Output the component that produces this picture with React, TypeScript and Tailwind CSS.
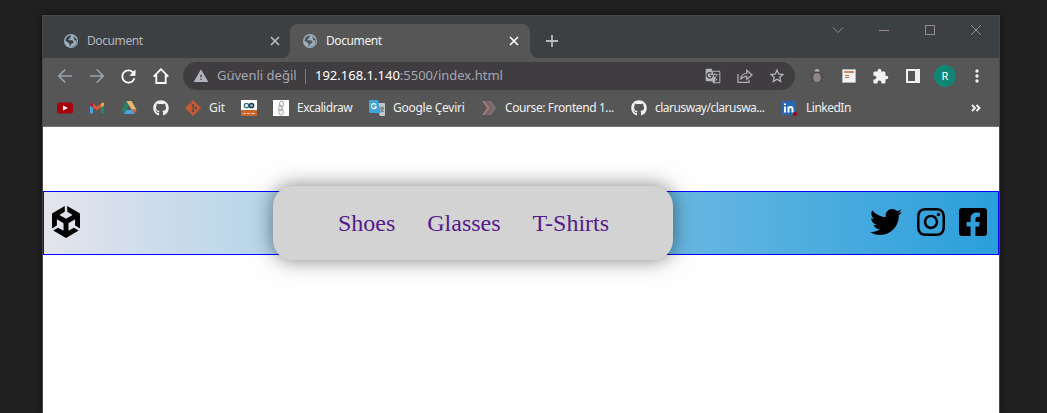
import React from "react";
import { FaUnity, FaTwitter, FaInstagram, FaGithub } from "react-icons/fa6";
import { FaFacebookSquare } from "react-icons/fa";
import { MdRefresh, MdWarning, MdGTranslate, MdStarBorder, MdExtension } from "react-icons/md";

function Close({ className }: { className: string }) {
  return (
    <svg viewBox="0 0 10 10" className={`h-[10px] w-[10px] shrink-0 ${className}`} fill="none" stroke="currentColor" strokeWidth="1.6">
      <path d="M1 1l8 8M9 1l-8 8" />
    </svg>
  );
}

function Globe({ hole }: { hole: string }) {
  return (
    <svg viewBox="0 0 14 14" className="h-[14px] w-[14px] shrink-0">
      <circle cx="7" cy="7" r="7" fill="#9bb0c1" />
      <path
        className={hole}
        d="M1.500 6.800C1.500 4 3.500 1.900 6 1.500L7.800 1.700L6.300 2.800L6.400 4.200L4.600 5L4.900 6.200H8.200L9.600 7.800L9.200 9.300L7.400 9.700L6.600 11.300L5.800 12.500C7.600 13 9.700 12.300 11 10.900C12.200 9.700 12.700 8.200 12.400 6.500L11 6.600L9.700 5.500L10.500 4.300L9.200 3.500L9.600 2.300L12.600 5.200L13 8.200L11.400 11.300L8.500 12.900L5.300 12.600L5.600 10.400L4.600 8.700L2.600 7.400Z"
      />
    </svg>
  );
}

function Arrow({ className = "" }: { className?: string }) {
  return (
    <svg viewBox="0 0 16 16" className={`h-4 w-4 shrink-0 text-[#99a3b3] ${className}`} fill="none" stroke="currentColor" strokeWidth="1.7">
      <path d="M15 8H2M8.2 1.5L1.8 8l6.4 6.5" />
    </svg>
  );
}

function Tabs() {
  return (
    <div className="flex h-[43px] border-t border-[#4b4b4d] bg-[#3c4043] pt-2">
      <div className="flex h-[34px] w-[247px] shrink-0 items-center pl-[21px] text-[#b7b5bd]">
        <Globe hole="fill-[#3c4043]" />
        <span className="ml-[9px] w-[183px] text-[12px] tracking-[-0.4px]">Document</span>
        <Close className="text-[#c0bcc0]" />
      </div>
      <div className="relative flex h-[34px] w-[240px] shrink-0 items-center rounded-t-lg bg-[#565656] pl-[13px] text-[#f1f3f4]">
        <span className="absolute bottom-0 -left-2 h-2 w-2 bg-[radial-gradient(circle_at_0_0,#3c4043_7.5px,#565656_8px)]" />
        <Globe hole="fill-[#565656]" />
        <span className="ml-[9px] w-[183px] text-[12px] tracking-[-0.4px]">Document</span>
        <Close className="text-white" />
        <span className="absolute -right-2 bottom-0 h-2 w-2 bg-[radial-gradient(circle_at_100%_0,#3c4043_7.5px,#565656_8px)]" />
      </div>
      <svg viewBox="0 0 12 12" className="mt-[11px] ml-4 h-3 w-3 text-[#b4b9bf]" stroke="currentColor" strokeWidth="1.8">
        <path d="M6 0v12M0 6h12" />
      </svg>
      <svg viewBox="0 0 150 12" className="mr-[17px] ml-auto h-3 w-[150px] text-[#9b8a92]" fill="none" stroke="currentColor" strokeWidth="1">
        <path d="M1 3.5l5 5 5-5M47 6.5h10M93.5 1.5h9v9h-9zM139 1l10 10M149 1l-10 10" />
      </svg>
    </div>
  );
}

function Toolbar() {
  return (
    <div className="flex h-9 items-center pl-[14px]">
      <Arrow />
      <Arrow className="ml-4 rotate-180" />
      <MdRefresh className="ml-[13px] h-[21px] w-[21px] shrink-0 text-white" />
      <svg viewBox="0 0 16 16" className="ml-[14px] h-4 w-4 shrink-0 text-white" fill="none" stroke="currentColor" strokeWidth="1.8">
        <path d="M.7 8.7L8 1.2l7.3 7.5M3.3 7v8h9.4V7" />
      </svg>
      <div className="ml-[14px] flex h-7 w-[612px] shrink-0 items-center rounded-full bg-[#403d40] pl-[10px] text-[13px] text-[#a5a7b3]">
        <MdWarning className="h-4 w-4 shrink-0 text-[#b0b5bd]" />
        <span className="ml-2 w-[88px] shrink-0 whitespace-nowrap">Güvenli değil</span>
        <span className="h-[15px] w-px shrink-0 bg-[#827981]" />
        <span className="ml-[9px] w-[391px] shrink-0 whitespace-nowrap">
          <span className="text-white">192.168.1.140</span>:5500/index.html
        </span>
        <MdGTranslate className="-ml-px h-4 w-4 shrink-0 text-[#b4b5ba]" />
        <svg viewBox="0 0 16 14" className="ml-[16px] h-[14px] w-4 shrink-0 text-[#b4afb7]" fill="none" stroke="currentColor" strokeWidth="1.2">
          <path d="M1 5v8.3h11v-2.5M3.7 10.5c.3-4 2.5-6 6-6V1.2L15 6 9.700 10.500V7.300C7 7.300 5 8.200 3.700 10.500z" />
        </svg>
        <MdStarBorder className="ml-[15px] h-[18px] w-[18px] shrink-0 text-[#bbb9c2]" />
      </div>
      <svg viewBox="0 0 16 16" className="ml-[14px] h-4 w-4 shrink-0">
        <path d="M2 5l3 2M14 5l-3 2M1 9h14M2 14l3-3M14 14l-3-3" stroke="#474347" strokeWidth="1" />
        <path d="M5.500 3.500a2.500 2.500 0 015 0z" fill="#b5adb6" />
        <ellipse cx="8" cy="9.500" rx="3.700" ry="4.500" fill="#92838a" />
        <path d="M5 4.500h6" stroke="#444" />
      </svg>
      <svg viewBox="0 0 14 14" className="ml-[17px] h-[14px] w-[14px] shrink-0">
        <path fill="#f4f4f4" stroke="#adb6bd" d="M.5.5h13v13H.5z" />
        <path stroke="#c56d41" strokeWidth="1.600" d="M2 3h10" />
        <path stroke="#c56d41" d="M3 6.500h4M3 8.500h4" />
      </svg>
      <MdExtension className="ml-[16px] h-[17px] w-[17px] shrink-0 text-[#f1f1f1]" />
      <svg viewBox="0 0 14 14" className="ml-[17px] h-[14px] w-[14px] shrink-0">
        <path fill="#f1f1f1" fillRule="evenodd" d="M0 0h14v14H0zM2 2v10h7V2z" />
      </svg>
      <span className="ml-[14px] flex h-[22px] w-[22px] shrink-0 items-center justify-center rounded-full bg-[#128577] text-[11px] text-white">R</span>
      <svg viewBox="0 0 4 14" className="ml-[19px] h-[14px] w-1 shrink-0" fill="#f1f1f1">
        <circle cx="2" cy="2" r="1.700" /><circle cx="2" cy="7" r="1.700" /><circle cx="2" cy="12" r="1.700" />
      </svg>
    </div>
  );
}

function Bookmark({ className, label, children }: { className: string; label?: string; children: React.ReactNode }) {
  return (
    <div className={`flex shrink-0 items-center gap-2 whitespace-nowrap ${className}`}>
      {children}
      {label && <span>{label}</span>}
    </div>
  );
}

function Bookmarks() {
  return (
    <div className="flex h-[33px] items-center border-b border-[#777377] pb-[5px] pl-[14px] text-[12px] text-[#f0f0f0] [&_svg]:h-4 [&_svg]:w-4 [&_svg]:shrink-0">
      <Bookmark className="w-8">
        <svg viewBox="0 0 16 16"><rect y="2.500" width="16" height="11" rx="2.500" fill="#a50008" /><path d="M6 5.500l5 2.500-5 2.500z" fill="#fff" /></svg>
      </Bookmark>
      <Bookmark className="w-8">
        <svg viewBox="0 0 16 16">
          <path d="M1 4.500l3 2v7H1z" fill="#4c9fda" /><path d="M15 4.500l-3 2v7h3z" fill="#258a5a" />
          <path d="M1 3q1-1 3 .5l4 3.200 4-3.200v4L8 10.500 4 7.500 1 5.500z" fill="#d55638" />
          <path d="M1 3q1-1 3 .5v4l-3-2z" fill="#a52029" /><path d="M12 3.500Q14 2 15 3v2.500l-3 2z" fill="#e5ad4c" />
        </svg>
      </Bookmark>
      <Bookmark className="w-8">
        <svg viewBox="0 0 16 16"><path d="M5.500 1h5L3 14 .5 9.800z" fill="#278465" /><path d="M5.500 1h5l5 8.800h-5z" fill="#e5b76b" /><path d="M3 14l2.500-4.200h10L13 14z" fill="#47a2dd" /><path d="M10.500 9.800h5L13 14z" fill="#ca6548" /><path d="M8 5.500l2.500 4.300h-5z" fill="#565656" /></svg>
      </Bookmark>
      <Bookmark className="w-8"><FaGithub /></Bookmark>
      <Bookmark className="w-14" label="Git">
        <svg viewBox="0 0 16 16"><path d="M8 .2L15.800 8 8 15.800.2 8z" fill="#c85b33" stroke="#c85b33" strokeWidth=".4" strokeLinejoin="round" /><path d="M5.500 2.700L8 5.200v6M8 5.500l3 3" fill="none" stroke="#5b4b48" /><g fill="#5b4b48"><circle cx="8" cy="5.300" r="1.200" /><circle cx="8" cy="11" r="1.200" /><circle cx="11" cy="8.300" r="1.200" /></g></svg>
      </Bookmark>
      <Bookmark className="w-8">
        <svg viewBox="0 0 16 16"><path fill="#fff" d="M0 0h16v10H0z" /><path fill="#c8662e" d="M0 10h16v6H0z" /><circle cx="5.500" cy="5.500" r="2.200" fill="none" stroke="#38708b" strokeWidth="1.300" /><circle cx="10.500" cy="5.500" r="2.200" fill="#8aabba" stroke="#17394a" strokeWidth="1.300" /><path d="M2 13.500h3m1 0h3m1 0h4" stroke="#ecc3a6" /></svg>
      </Bookmark>
      <Bookmark className="w-24 tracking-[-0.45px]" label="Excalidraw">
        <svg viewBox="0 0 16 16"><path fill="#fff" d="M0 0h16v16H0z" /><g fill="none" stroke="#a2a2a2"><ellipse cx="8.500" cy="4" rx="2" ry="3" /><ellipse cx="7.500" cy="8" rx="1.800" ry="3" /><ellipse cx="8" cy="12" rx="2.300" ry="3" /></g></svg>
      </Bookmark>
      <Bookmark className="w-28 tracking-[-0.27px]" label="Google Çeviri">
        <svg viewBox="0 0 16 16"><path d="M6 3h9q1 0 1 1v11q0 1-1 1h-4z" fill="#c5c8cc" /><path d="M1 0h8l3 13H1q-1 0-1-1V1q0-1 1-1z" fill="#40a5dd" /><path d="M7 4.800a2.500 2.500 0 10.300 2.200H5" fill="none" stroke="#fff" strokeWidth="1.200" /><path d="M11 8h4m-2-1.500V8m1.500 0q-1 3-2.500 4m0-3q1 2 3 3" fill="none" stroke="#666a70" /></svg>
      </Bookmark>
      <Bookmark className="w-[150px] tracking-[-0.4px]" label="Course: Frontend 1...">
        <svg viewBox="0 0 16 16"><path d="M1 1h3l5 7-5 7H1l5-7z" fill="#a57970" /><path d="M7 1h3l5 7-5 7H7l5-7z" fill="#81717a" /><path d="M4 1h3l5 7-5 7H4l5-7z" fill="#75666b" /></svg>
      </Bookmark>
      <Bookmark className="w-[151px] tracking-[-0.5px]" label="clarusway/claruswa..."><FaGithub /></Bookmark>
      <Bookmark className="w-[187px] tracking-[-0.5px]" label="LinkedIn">
        <svg viewBox="0 0 16 16"><path fill="#2867b2" d="M0 1h14v14H0z" /><path d="M3 6.500v6m0-9v1.500M6.500 12.500v-6m0 2.500q0-2 2-2t2 2v3.500" fill="none" stroke="#fff" strokeWidth="2" /><circle cx="13" cy="14" r="2" fill="#a70012" /></svg>
      </Bookmark>
      <svg viewBox="0 0 16 16" fill="none" stroke="currentColor" strokeWidth="1.900" className="-ml-px"><path d="M4 5l3 3-3 3M8.500 5l3 3-3 3" /></svg>
    </div>
  );
}

export default function App() {
  return (
    <div className="h-[413px] w-[1047px] overflow-hidden bg-[#202020] pt-[15px] pl-[42px]">
      <div className="h-[398px] w-[958px] border-x border-[#49474b] bg-[#fefefe] shadow-[0_0_8px_#0008]">
        <div className="bg-[#565656] font-['Noto_Sans',sans-serif]">
          <Tabs />
          <Toolbar />
          <Bookmarks />
        </div>
        <nav className="mt-16 flex h-16 w-[956px] items-center border border-[#0000ff] bg-[linear-gradient(90deg,#e4e4ec_0%,#b9d6ea_22%,#2a9fdb_100%)] pr-[11px] pl-2">
          <FaUnity className="-mt-[2px] h-8 w-7 text-black" />
          <div className="-my-2 ml-[193px] flex h-[74px] w-[400px] shrink-0 items-center justify-center gap-8 rounded-[20px] bg-[#d3d3d3] pl-px font-['Liberation_Serif',serif] text-[24px] text-[#551a8b] shadow-[0_0_20px_rgba(0,0,0,0.5)]">
            <a href="#">Shoes</a>
            <a href="#">Glasses</a>
            <a href="#">T-Shirts</a>
          </div>
          <div className="-mt-[2px] ml-auto flex items-center gap-[14px] text-black">
            <FaTwitter className="h-8 w-8 -translate-x-px" />
            <FaInstagram className="h-8 w-7" />
            <FaFacebookSquare className="h-8 w-7" />
          </div>
        </nav>
      </div>
    </div>
  );
}
